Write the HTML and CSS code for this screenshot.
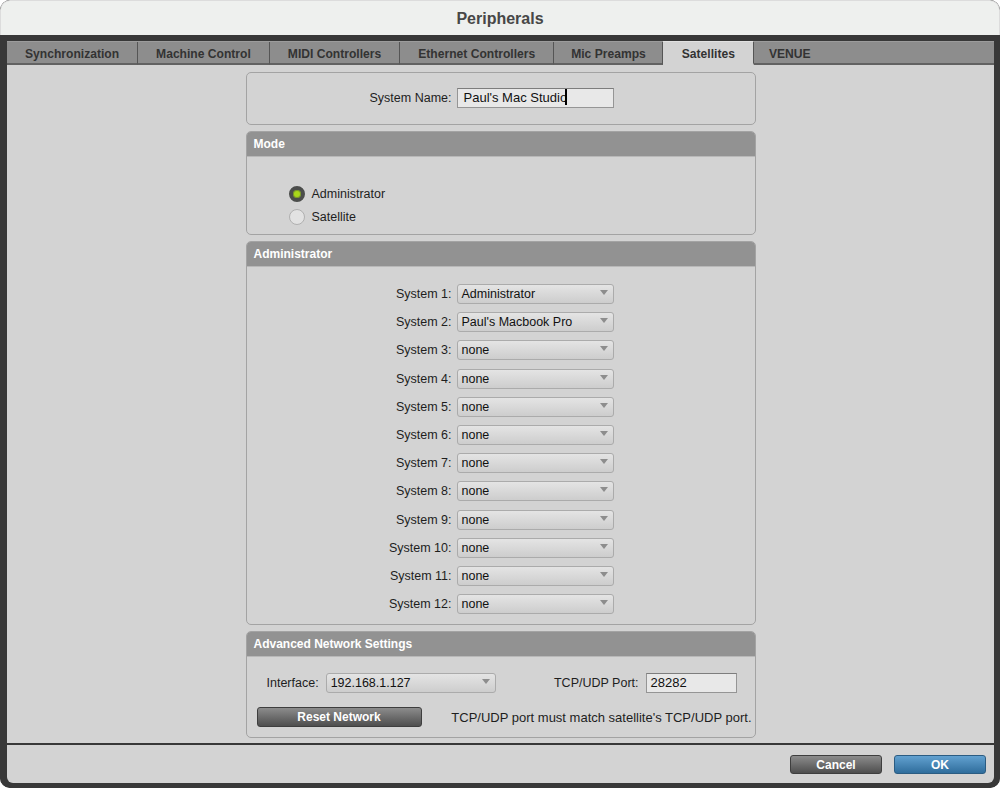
FILE: index.html
```html
<!DOCTYPE html>
<html lang="en">
<head>
    <meta charset="UTF-8">
    <title>Peripherals</title>
    <link rel="stylesheet" href="styles.css">
</head>
<body>
<div class="window">
    <div class="titlebar">Peripherals</div>
    <div class="frame">
        <div class="tabs">
            <div class="tab">Synchronization</div>
            <div class="tab">Machine Control</div>
            <div class="tab">MIDI Controllers</div>
            <div class="tab">Ethernet Controllers</div>
            <div class="tab tab-mic">Mic Preamps</div>
            <div class="tab tab-active">Satellites</div>
            <div class="tab tab-last">VENUE</div>
        </div>

        <div class="content">
            <div class="panel panel-name">
                <div class="field-grid">
                    <label class="field-label">System Name:</label>
                    <div class="textbox">Paul's Mac Studio<span class="caret"></span></div>
                </div>
            </div>

            <div class="panel">
                <div class="panel-header">Mode</div>
                <div class="panel-body mode-body">
                    <div class="radio-row">
                        <span class="radio radio-on"></span>
                        <span>Administrator</span>
                    </div>
                    <div class="radio-row">
                        <span class="radio"></span>
                        <span>Satellite</span>
                    </div>
                </div>
            </div>

            <div class="panel">
                <div class="panel-header">Administrator</div>
                <div class="panel-body admin-body">
                    <div class="field-grid systems">
                        <label class="field-label">System 1:</label>
                        <div class="select">Administrator</div>
                        <label class="field-label">System 2:</label>
                        <div class="select">Paul's Macbook Pro</div>
                        <label class="field-label">System 3:</label>
                        <div class="select">none</div>
                        <label class="field-label">System 4:</label>
                        <div class="select">none</div>
                        <label class="field-label">System 5:</label>
                        <div class="select">none</div>
                        <label class="field-label">System 6:</label>
                        <div class="select">none</div>
                        <label class="field-label">System 7:</label>
                        <div class="select">none</div>
                        <label class="field-label">System 8:</label>
                        <div class="select">none</div>
                        <label class="field-label">System 9:</label>
                        <div class="select">none</div>
                        <label class="field-label">System 10:</label>
                        <div class="select">none</div>
                        <label class="field-label">System 11:</label>
                        <div class="select">none</div>
                        <label class="field-label">System 12:</label>
                        <div class="select">none</div>
                    </div>
                </div>
            </div>

            <div class="panel">
                <div class="panel-header">Advanced Network Settings</div>
                <div class="panel-body net-body">
                    <div class="net-row">
                        <div class="net-group">
                            <label>Interface:</label>
                            <div class="select select-wide">192.168.1.127</div>
                        </div>
                        <div class="net-group">
                            <label>TCP/UDP Port:</label>
                            <div class="textbox textbox-port">28282</div>
                        </div>
                    </div>
                    <div class="net-row net-row-2">
                        <button class="btn btn-dark btn-reset">Reset Network</button>
                        <span class="note">TCP/UDP port must match satellite's TCP/UDP port.</span>
                    </div>
                </div>
            </div>
        </div>

        <div class="footer">
            <button class="btn btn-dark">Cancel</button>
            <button class="btn btn-blue">OK</button>
        </div>
    </div>
</div>
</body>
</html>
```

FILE: styles.css
```css
html, body {
    margin: 0;
    padding: 0;
    background: #fff;
}
body {
    font-family: "Liberation Sans", Arial, sans-serif;
    font-size: 12.5px;
    color: #1e1e1e;
}
.window {
    width: 1000px;
    height: 788px;
    border-radius: 10px;
    overflow: hidden;
    background: #3a3a3a;
    display: flex;
    flex-direction: column;
}
.titlebar {
    height: 35px;
    flex: none;
    background: #eef0ee;
    border-radius: 10px 10px 0 0;
    border: 1px solid #dcdcdc;
    border-bottom: 0;
    box-sizing: border-box;
    text-align: center;
    line-height: 35px;
    font-size: 16px;
    font-weight: bold;
    color: #474747;
}
.frame {
    flex: 1;
    display: flex;
    flex-direction: column;
    padding: 6px 6px 5px 7px;
    background: #383838;
    border-radius: 0 0 10px 10px;
}

/* tabs */
.tabs {
    height: 24px;
    flex: none;
    display: flex;
    background: #8d8d8d;
    border-top: 1px solid #9c9c9c;
    box-sizing: border-box;
}
.tab {
    padding: 3px 18px 0;
    line-height: 18px;
    font-size: 12.1px;
    font-weight: bold;
    color: #333;
    border-right: 1px solid #555;
    border-bottom: 2px solid #626262;
    white-space: nowrap;
}
.tab-mic {
    padding: 3px 16px 0 17px;
}
.tab-active {
    background: #d3d3d3;
    border-bottom-color: #d3d3d3;
    border-top: 1px solid #e2e2e2;
    margin-top: -1px;
    padding-left: 19px;
}
.tab-last {
    flex: 1;
    padding-left: 15px;
    border-right: 0;
}

.content {
    flex: 1;
    background: #d3d3d3;
    padding-top: 7px;
    display: flex;
    flex-direction: column;
    align-items: center;
    gap: 6px;
}

/* panels */
.panel {
    width: 510px;
    box-sizing: border-box;
    border: 1px solid #a3a3a3;
    border-radius: 5px;
    background: #d3d3d3;
    overflow: hidden;
}
.panel-header {
    height: 24px;
    line-height: 24px;
    background: #929292;
    color: #fff;
    font-weight: bold;
    font-size: 12px;
    padding-left: 7px;
    border-bottom: 1px solid #b8b8b8;
}
.panel-name {
    padding: 15px 0 16px;
}
.field-grid {
    display: grid;
    grid-template-columns: 205px 157px;
    column-gap: 5px;
    align-items: center;
}
.field-label {
    text-align: right;
}
.systems {
    row-gap: 8.2px;
}
.admin-body {
    padding: 17px 0 10px;
}
.mode-body {
    padding: 25px 0 6px 42px;
}
.radio-row {
    height: 23px;
    display: flex;
    align-items: center;
    gap: 7px;
}
.radio {
    width: 16px;
    height: 16px;
    box-sizing: border-box;
    border-radius: 50%;
    border: 1px solid #b0b0b0;
    background: #e2e2e2;
}
.radio-on {
    border: 4px solid #4b4d4b;
    background: #a9d81a;
    box-shadow: inset 0 0 0 1px #7c9a2a;
}

/* controls */
.textbox {
    height: 20px;
    line-height: 18px;
    box-sizing: border-box;
    border: 1px solid #959595;
    border-top-color: #7d7d7d;
    background: #e8e8e8;
    padding-left: 6px;
    font-size: 13px;
    color: #111;
}
.caret {
    display: inline-block;
    width: 2px;
    height: 16px;
    background: #000;
    vertical-align: middle;
    margin-left: -2px;
    margin-top: -3px;
}
.select {
    position: relative;
    height: 20px;
    line-height: 19px;
    box-sizing: border-box;
    border: 1px solid #ababab;
    border-radius: 3px;
    background: linear-gradient(#e4e4e4, #cdcdcd);
    padding-left: 4px;
    color: #111;
}
.select::after {
    content: "";
    position: absolute;
    right: 5px;
    top: 5px;
    border-left: 4px solid transparent;
    border-right: 4px solid transparent;
    border-top: 5px solid #8d8d8d;
}
.select-wide {
    width: 170px;
}

/* network */
.net-body {
    padding: 16px 18px 10px 20px;
}
.net-row {
    display: flex;
    justify-content: space-between;
    align-items: center;
}
.net-group {
    display: flex;
    align-items: center;
    gap: 7px;
}
.textbox-port {
    width: 91px;
    padding-left: 4px;
}
.net-row-2 {
    margin: 14px -15px 0 -10px;
}
.note {
    padding-top: 1px;
    font-size: 13px;
}

/* buttons */
.btn {
    height: 20px;
    box-sizing: border-box;
    border-radius: 3px;
    font-family: "Liberation Sans", Arial, sans-serif;
    font-size: 12px;
    font-weight: bold;
    color: #fff;
    padding: 0;
    cursor: default;
}
.btn-dark {
    border: 1px solid #3e3e3e;
    background: linear-gradient(#8c8c8c, #4e4e4e);
}
.btn-blue {
    border: 1px solid #2b5c82;
    background: linear-gradient(#62a1d0, #2f6d9c);
}
.btn-reset {
    width: 165px;
}
.footer {
    flex: none;
    height: 38px;
    margin-top: 2px;
    background: #d3d3d3;
    border-radius: 0 0 6px 6px;
    display: flex;
    justify-content: flex-end;
    align-items: flex-start;
    gap: 12px;
    padding: 10px 8px 0 0;
    box-sizing: border-box;
}
.footer .btn {
    width: 92px;
    height: 19px;
}
```
